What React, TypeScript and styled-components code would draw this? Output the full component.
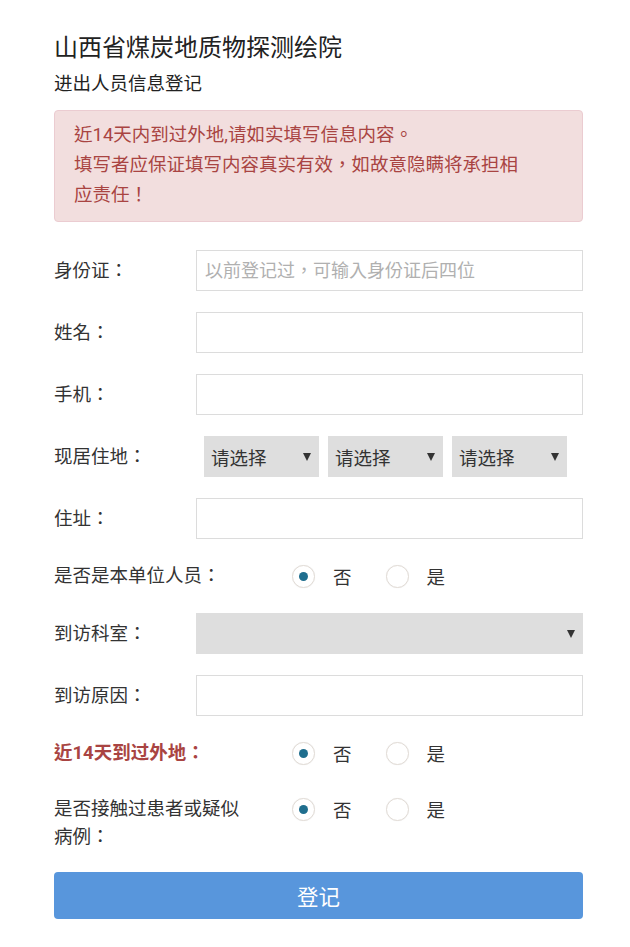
import React from 'react';
import styled, { createGlobalStyle } from 'styled-components';

const GlobalStyle = createGlobalStyle`
	html, body {
		margin: 0;
		padding: 0;
		background: #ffffff;
	}
	body {
		font-family: Roboto, "Noto Sans CJK TC", "Noto Sans CJK SC", sans-serif;
		color: #333333;
	}
`;

const Page = styled.div`
	width: 529px;
	padding: 33px 0 26px 54px;
`;

const Title = styled.h1`
	margin: 0;
	font-size: 24px;
	font-weight: 400;
	line-height: 30px;
	color: #222222;
`;

const SubTitle = styled.h2`
	margin: 8px 0 0;
	font-size: 18.5px;
	font-weight: 400;
	line-height: 26px;
	color: #222222;
`;

const Alert = styled.div`
	margin-top: 13px;
	padding: 9px 52px 11px 19px;
	background: #f2dede;
	border: 1px solid #ebccd1;
	border-radius: 4px;
	color: #a94442;
	font-size: 18.5px;
	line-height: 30px;
`;

const Form = styled.div`
	display: flex;
	flex-direction: column;
	gap: 21px;
	margin-top: 28px;
`;

const Row = styled.div<{ $tall?: boolean }>`
	display: flex;
	align-items: ${p => (p.$tall ? 'flex-start' : 'center')};
	min-height: ${p => (p.$tall ? 'auto' : '41px')};
	padding-top: ${p => (p.$tall ? '5px' : '0')};
`;

const RadioRow = styled(Row)`
	min-height: 32px;
`;

const Label = styled.div<{ $wide?: boolean; $warn?: boolean }>`
	flex-shrink: 0;
	width: ${p => (p.$wide ? '196px' : '142px')};
	margin-right: ${p => (p.$wide ? '40px' : '0')};
	font-size: 18.5px;
	line-height: 28px;
	font-weight: ${p => (p.$warn ? 700 : 400)};
	color: ${p => (p.$warn ? '#a94442' : '#333333')};
`;

const Input = styled.input`
	box-sizing: border-box;
	flex: 1;
	height: 41px;
	padding: 0 8px;
	border: 1px solid #dcdcdc;
	border-radius: 0;
	font-family: inherit;
	font-size: 18px;
	color: #333333;
	outline: none;
	&::placeholder {
		color: #b0b0b0;
	}
`;

const SelectGroup = styled.div`
	display: flex;
	gap: 9px;
	margin-left: 8px;
`;

const Select = styled.div<{ $full?: boolean }>`
	box-sizing: border-box;
	display: flex;
	align-items: center;
	justify-content: space-between;
	width: ${p => (p.$full ? 'auto' : '115px')};
	flex: ${p => (p.$full ? 1 : 'none')};
	height: 41px;
	padding: 0 8px 0 7px;
	background: #dedede;
	font-size: 18.5px;
	color: #333333;
	&::after {
		content: '';
		margin-left: auto;
		border-left: 4px solid transparent;
		border-right: 4px solid transparent;
		border-top: 8px solid #333333;
	}
`;

const RadioGroup = styled.div`
	display: flex;
	align-items: center;
	height: 28px;
`;

const RadioOption = styled.label`
	display: flex;
	align-items: center;
	margin-right: 32px;
	font-size: 18.5px;
	color: #333333;
`;

const RadioCircle = styled.span<{ $checked?: boolean }>`
	box-sizing: border-box;
	display: flex;
	align-items: center;
	justify-content: center;
	width: 23px;
	height: 23px;
	margin: 0 18px 0 2px;
	border: 1px solid #e2dcd6;
	border-radius: 50%;
	background: #ffffff;
	box-shadow: 0 0 1px rgba(0, 0, 0, 0.08);
	&::after {
		content: '';
		display: ${p => (p.$checked ? 'block' : 'none')};
		width: 9px;
		height: 9px;
		border-radius: 50%;
		background: #1f6e8e;
	}
`;

const SubmitButton = styled.button`
	margin-top: 21px;
	width: 100%;
	height: 47px;
	border: none;
	border-radius: 4px;
	background: #5896dc;
	color: #ffffff;
	font-family: inherit;
	font-size: 21.5px;
	cursor: pointer;
`;

const YesNo = () => (
	<RadioGroup>
		<RadioOption>
			<RadioCircle $checked />
			否
		</RadioOption>
		<RadioOption>
			<RadioCircle />
			是
		</RadioOption>
	</RadioGroup>
);

export default function App() {
	return (
		<Page>
			<GlobalStyle />
			<Title>山西省煤炭地质物探测绘院</Title>
			<SubTitle>进出人员信息登记</SubTitle>
			<Alert>
				近14天内到过外地,请如实填写信息内容。
				<br />
				填写者应保证填写内容真实有效，如故意隐瞒将承担相应责任！
			</Alert>
			<Form>
				<Row>
					<Label>身份证：</Label>
					<Input placeholder="以前登记过，可输入身份证后四位" />
				</Row>
				<Row>
					<Label>姓名：</Label>
					<Input />
				</Row>
				<Row>
					<Label>手机：</Label>
					<Input />
				</Row>
				<Row>
					<Label>现居住地：</Label>
					<SelectGroup>
						<Select>请选择</Select>
						<Select>请选择</Select>
						<Select>请选择</Select>
					</SelectGroup>
				</Row>
				<Row>
					<Label>住址：</Label>
					<Input />
				</Row>
				<RadioRow>
					<Label $wide>是否是本单位人员：</Label>
					<YesNo />
				</RadioRow>
				<Row>
					<Label>到访科室：</Label>
					<Select $full />
				</Row>
				<Row>
					<Label>到访原因：</Label>
					<Input />
				</Row>
				<RadioRow>
					<Label $wide $warn>
						近14天到过外地：
					</Label>
					<YesNo />
				</RadioRow>
				<Row $tall>
					<Label $wide>是否接触过患者或疑似病例：</Label>
					<YesNo />
				</Row>
			</Form>
			<SubmitButton>登记</SubmitButton>
		</Page>
	);
}
